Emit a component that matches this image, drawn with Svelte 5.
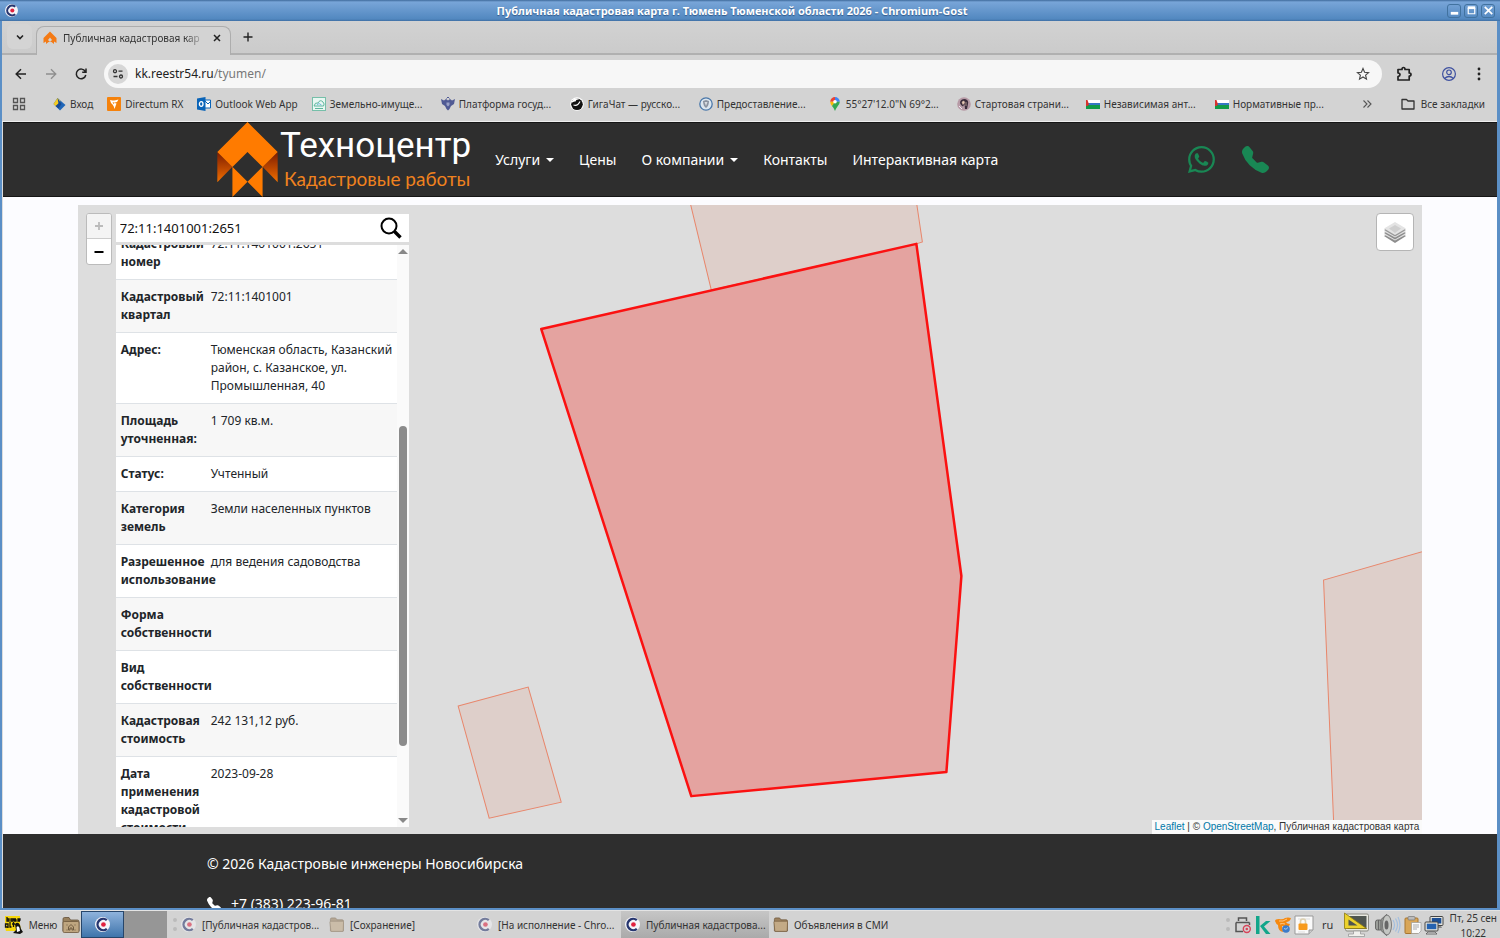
<script>
  const bookmarks = [
    { icon: 'login', label: 'Вход' },
    { icon: 'directum', label: 'Directum RX' },
    { icon: 'outlook', label: 'Outlook Web App' },
    { icon: 'land', label: 'Земельно-имуще...', wide: true },
    { icon: 'eagle', label: 'Платформа госуд...', wide: true },
    { icon: 'giga', label: 'ГигаЧат — русско...', wide: true },
    { icon: 'shield', label: 'Предоставление...', wide: true },
    { icon: 'pin', label: '55°27\'12.0"N 69°2...', wide: true },
    { icon: 'start', label: 'Стартовая страни...', wide: true },
    { icon: 'flag', label: 'Независимая ант...', wide: true },
    { icon: 'flag', label: 'Нормативные пр...', wide: true }
  ];

  const menu = [
    { label: 'Услуги', caret: true },
    { label: 'Цены' },
    { label: 'О компании', caret: true },
    { label: 'Контакты' },
    { label: 'Интерактивная карта' }
  ];

  const rows = [
    ['Кадастровый номер', '72:11:1401001:2651'],
    ['Кадастровый квартал', '72:11:1401001'],
    ['Адрес:', 'Тюменская область, Казанский район, с. Казанское, ул. Промышленная, 40'],
    ['Площадь уточненная:', '1 709 кв.м.'],
    ['Статус:', 'Учтенный'],
    ['Категория земель', 'Земли населенных пунктов'],
    ['Разрешенное использование', 'для ведения садоводства'],
    ['Форма собственности', ''],
    ['Вид собственности', ''],
    ['Кадастровая стоимость', '242 131,12 руб.'],
    ['Дата применения кадастровой стоимости', '2023-09-28']
  ];

  const tasks = [
    { icon: 'chromium', label: '[Публичная кадастров...', faded: true },
    { icon: 'folder', label: '[Сохранение]', faded: true },
    { icon: 'chromium', label: '[На исполнение - Chro...', faded: true },
    { icon: 'chromium', label: 'Публичная кадастрова...', active: true },
    { icon: 'folder', label: 'Объявления в СМИ' }
  ];

  let query = $state('72:11:1401001:2651');

  function scrolled(node) {
    node.scrollTop = 18;
  }
</script>

{#snippet chromium()}
  <svg class="i15" viewBox="0 0 16 16">
    <circle cx="8" cy="8" r="8" fill="#f4f4f8" />
    <path d="M12.6 3.4A6 6 0 1 0 12.6 12.6" fill="none" stroke="#26356f" stroke-width="2.6" />
    <circle cx="9" cy="8" r="2.5" fill="#e0223f" />
  </svg>
{/snippet}

{#snippet folder()}
  <svg class="i15" viewBox="0 0 16 16">
    <path d="M1.5 14.5v-12q0-1.500 1.500-1.500h4l1.500 2h5.500q1.500 0 1.500 1.500v10q0 .8-.8.8h-12.400q-.8 0-.8-.8z" fill="#9d8260" stroke="#6d573c" stroke-width=".8" />
    <path d="M1 5.500q0-1 1-1h12.500q1 0 1 1l-.4 9q0 .8-.8.8h-11.600q-.8 0-.8-.8z" fill="#c3aa86" stroke="#7c6446" stroke-width=".8" />
  </svg>
{/snippet}

{#snippet house()}
  <svg class="i14" viewBox="0 0 14 14">
    <path d="M7 .5l6.500 6.500v5l-2.500-1.500V13L8.500 11h-3L3 13v-2.500L.5 12V7z" fill="#f47a14" />
    <path d="M7 6.500L9 9l-2 2-2-2z" fill="#d3d3d3" />
  </svg>
{/snippet}

{#snippet mark(name)}
  <svg class="i14" viewBox="0 0 14 14">
    {#if name === 'login'}
      <path d="M5.500 1l8 7L8 13.500 1.500 7z" fill="#1f66b8" />
      <path d="M5.500 1l3 3-4.500 5.500L1.500 7z" fill="#f4cb23" />
      <path d="M5.500 1l4 6-3 4.500-3-2.500 3-2.500z" fill="#184a94" />
    {:else if name === 'directum'}
      <rect width="14" height="14" rx="1" fill="#f5820c" />
      <path d="M3 3q3 .5 4 .5t4.500-1l-1.500 2.500-3 .8 2.500.7L7.500 12Q7 9 5.500 7.500 3.500 6 3 3z" fill="#fff" />
      <path d="M5.500 5l2 .8-.8 1.500z" fill="#f5820c" />
    {:else if name === 'outlook'}
      <path d="M7 3h6.500v8H7z" fill="#fff" stroke="#0a64b8" />
      <path d="M8 4l3 3 3-3" fill="none" stroke="#0a64b8" />
      <path d="M0 1.500L8.500 0v14L0 12.500z" fill="#0a64b8" />
      <ellipse cx="4.200" cy="7" rx="1.800" ry="2.400" fill="none" stroke="#fff" stroke-width="1.300" />
    {:else if name === 'land'}
      <rect x=".5" y=".5" width="13" height="13" fill="#e8f7f2" stroke="#76bfa9" />
      <path d="M2 9q1-4 4-3 2-4 5-1 2 2 .5 4zM3 11.500h8" fill="none" stroke="#5db69d" />
      <path d="M5 8l2-1.500L9.500 8" fill="none" stroke="#72b8df" />
    {:else if name === 'eagle'}
      <path d="M0 2l3 1.500L5 2l2 1.500L9 2l2 1.500L14 2l-1 5-3 2-1.500 3L7 13.500 5.500 12 4 9 1 7z" fill="#505a94" />
      <path d="M5.500 5.500h3v2.500L7 9.500 5.500 8z" fill="#9aa1c6" />
      <path d="M5.500 1.500L7 0l1.500 1.500" fill="none" stroke="#505a94" />
    {:else if name === 'giga'}
      <circle cx="7" cy="7" r="6.800" fill="#fff" />
      <circle cx="7" cy="7.300" r="5.800" fill="#111" />
      <path d="M1.500 6Q2 2 6 1.200q2.500 0 3 1.300Q6 2 5.500 4.500 3.500 4 1.500 6z" fill="#fff" />
      <path d="M3.500 8q4 1.500 6.500-3.500" fill="none" stroke="#fff" stroke-width="1.200" />
    {:else if name === 'shield'}
      <circle cx="7" cy="7" r="6.200" fill="#dce6ef" stroke="#4a77a8" stroke-width="1.300" />
      <path d="M4 4l3-1 3 1q0 5-3 7-3-2-3-7z" fill="#8b93a0" />
      <path d="M5.500 5h3L7 9z" fill="#d8dbe0" />
    {:else if name === 'pin'}
      <path d="M7 0a4.800 4.800 0 0 0-4.800 4.800H7z" fill="#e94235" />
      <path d="M7 0a4.800 4.800 0 0 1 4.800 4.800H7z" fill="#4285f4" />
      <path d="M2.200 4.800Q2.200 7 4 9L7 4.800z" fill="#fbbc04" />
      <path d="M11.800 4.800Q11.800 7 9.500 9.500 8 11.500 7 14 6 11 4 9l3-4.200z" fill="#34a853" />
      <circle cx="7" cy="4.800" r="1.800" fill="#fff" />
    {:else if name === 'start'}
      <circle cx="7" cy="7" r="6.800" fill="#b79aa6" />
      <path d="M3 6q0-4 5-4 4 1 3 5l-1 5H8L7.500 7 6 9.500 4 8z" fill="#3b2c3c" />
      <path d="M5 5l2-1 .5 2L6 7.500zM9 5v4" fill="#e8c8b4" stroke="#e8c8b4" stroke-width=".6" />
      <path d="M2 9l3 3" stroke="#f2e4f1" />
    {:else}
      <rect y="3" width="14" height="3" fill="#fff" />
      <rect y="6" width="14" height="2" fill="#3578c4" />
      <rect y="8" width="14" height="4" fill="#119b48" />
      <path d="M0 3h1.500L3 7.500 1.500 9 0 9z" fill="#d9322e" />
    {/if}
  </svg>
{/snippet}

{#snippet phone()}
  <svg viewBox="0 0 16 16" fill="currentColor">
    <path d="M1.885.511a1.745 1.745 0 0 1 2.610.163L6.290 2.980c.329.423.445.974.315 1.494l-.547 2.190a.68.68 0 0 0 .178.643l2.457 2.457a.68.68 0 0 0 .644.178l2.189-.547a1.750 1.750 0 0 1 1.494.315l2.306 1.794c.829.645.905 1.870.163 2.611l-1.034 1.034c-.74.74-1.846 1.065-2.877.702a18.600 18.600 0 0 1-7.010-4.420 18.600 18.600 0 0 1-4.420-7.009c-.362-1.030-.037-2.137.703-2.877z" />
  </svg>
{/snippet}

<div class="desktop">
  <div class="window">
    <header class="titlebar">
      <span class="app-icon">{@render chromium()}</span>
      <span class="title">Публичная кадастровая карта г. Тюмень Тюменской области 2026 - Chromium-Gost</span>
      <div class="winbtns">
        <button aria-label="Свернуть"><svg viewBox="0 0 14 14"><path d="M3 10h8" stroke="#fff" stroke-width="3" /></svg></button>
        <button aria-label="Развернуть"><svg viewBox="0 0 14 14"><path d="M3.500 4v6.500h7V4" fill="none" stroke="#fff" stroke-width="1.300" /><path d="M3 4h8" stroke="#fff" stroke-width="3" /></svg></button>
        <button aria-label="Закрыть"><svg viewBox="0 0 14 14"><path d="M3 3l8 8m0-8l-8 8" stroke="#fff" stroke-width="1.800" /></svg></button>
      </div>
    </header>

    <div class="browser">
      <div class="tabstrip">
        <button class="tabsearch" aria-label="Поиск вкладок"><svg class="i14" viewBox="0 0 14 14"><path d="M4 5.500l3 3 3-3" fill="none" stroke="#222" stroke-width="1.600" /></svg></button>
        <div class="tab">
          {@render house()}
          <span class="tabname">Публичная кадастровая кар</span>
          <button class="close" aria-label="Закрыть вкладку"><svg viewBox="0 0 10 10"><path d="M2 2l6 6m0-6L2 8" stroke="#222" stroke-width="1.500" /></svg></button>
        </div>
        <button class="newtab" aria-label="Новая вкладка"><svg viewBox="0 0 10 10"><path d="M5 .5v9M.5 5h9" stroke="#222" stroke-width="1.400" /></svg></button>
      </div>

      <div class="toolbar">
        <button class="nav" aria-label="Назад"><svg class="i14" viewBox="0 0 14 14"><path d="M12 7H2.500M7 2.200L2.200 7 7 11.800" fill="none" stroke="#222" stroke-width="1.500" /></svg></button>
        <button class="nav" aria-label="Вперёд" disabled><svg class="i14" viewBox="0 0 14 14"><path d="M2 7h9.500M7 2.200L11.800 7 7 11.800" fill="none" stroke="#8e8e8e" stroke-width="1.300" /></svg></button>
        <button class="nav" aria-label="Обновить"><svg class="i14" viewBox="0 0 14 14"><path d="M11.300 4.500A4.800 4.800 0 1 0 11.800 8M12 1.500v3.800H8.200" fill="none" stroke="#222" stroke-width="1.500" /></svg></button>
        <div class="omnibox">
          <button class="site" aria-label="Сведения о сайте"><svg class="i14" viewBox="0 0 14 14" fill="none" stroke="#333" stroke-width="1.300"><circle cx="4" cy="4.200" r="1.500" /><path d="M7.500 4.200h4M2.500 9.500h4" /><circle cx="10" cy="9.500" r="1.500" /></svg></button>
          <span class="url">kk.reestr54.ru<i>/tyumen/</i></span>
          <button class="star" aria-label="Добавить в закладки"><svg class="i14" viewBox="0 0 14 14"><path d="M7 1.500l1.600 3.700 4 .4-3 2.600.9 3.900L7 10l-3.500 2.100.9-3.900-3-2.600 4-.4z" fill="none" stroke="#444" stroke-width="1.100" /></svg></button>
        </div>
        <div class="tools">
          <button class="nav" aria-label="Расширения"><svg class="i16" viewBox="0 0 16 16"><path d="M2 3.500h4q0-2 1.500-2T9 3.500h4.200V7q1.800 0 1.800 1.500T13.200 10v4H2v-3.500q2-.3 2-1.800T2 7z" fill="none" stroke="#222" stroke-width="1.700" stroke-linejoin="round" /></svg></button>
          <button class="nav" aria-label="Профиль"><svg class="i16" viewBox="0 0 16 16" fill="none" stroke="#3f51a0" stroke-width="1.200"><circle cx="8" cy="8" r="6.400" /><circle cx="8" cy="6.300" r="2.300" /><path d="M3.500 12.500Q8 8.500 12.500 12.500" /></svg></button>
          <button class="nav" aria-label="Меню"><svg class="i16" viewBox="0 0 16 16" fill="#222"><circle cx="8" cy="3" r="1.400" /><circle cx="8" cy="8" r="1.400" /><circle cx="8" cy="13" r="1.400" /></svg></button>
        </div>
      </div>

      <nav class="bookmarks" aria-label="Закладки">
        <svg class="i14 grid" viewBox="0 0 14 14" fill="none" stroke="#555" stroke-width="1.300"><path d="M1.500 1.500h4v4h-4zM8.500 1.500h4v4h-4zM1.500 8.500h4v4h-4zM8.500 8.500h4v4h-4z" /></svg>
        {#each bookmarks as b}
          <a href="#top" class:wide={b.wide}>{@render mark(b.icon)}<span>{b.label}</span></a>
        {/each}
        <svg class="i10 more" viewBox="0 0 10 10"><path d="M1.500 1.500L5 5 1.500 8.500M5.500 1.500L9 5 5.500 8.500" fill="none" stroke="#555" stroke-width="1.100" /></svg>
        <a class="all" href="#top"><svg class="i14" viewBox="0 0 14 14"><path d="M1 2.500h4.500L7 4h6v8H1z" fill="none" stroke="#333" stroke-width="1.300" stroke-linejoin="round" /></svg><span>Все закладки</span></a>
      </nav>
    </div>

    <div class="page">
      <header class="sitehead">
        <div class="container">
          <a class="logo" href="#top">
            <svg viewBox="20 10 186 228">
              <defs>
                <linearGradient id="wing" x1="0" y1="0" x2="0" y2="1">
                  <stop offset="0" stop-color="#7c1c00" />
                  <stop offset=".6" stop-color="#c24c00" />
                  <stop offset="1" stop-color="#f07000" />
                </linearGradient>
              </defs>
              <path d="M21 101l46 45-46 47zM205 101l-46 45 46 47z" fill="url(#wing)" />
              <path d="M113 10l92 91-46 46-46-46-46 46-46-46zM67 146l46 46-46 46zM159 146l-46 46 46 46z" fill="#ff7b00" />
            </svg>
            <span class="brand"><b>Техноцентр</b><small>Кадастровые работы</small></span>
          </a>
          <nav class="menu">
            {#each menu as m}
              <a href="#top">{m.label}{#if m.caret}<i class="caret"></i>{/if}</a>
            {/each}
          </nav>
          <div class="contacts">
            <a href="#top" aria-label="WhatsApp">
              <svg viewBox="0 0 16 16" fill="currentColor"><path d="M13.601 2.326A7.850 7.850 0 0 0 7.994 0C3.627 0 .068 3.558.064 7.926c0 1.399.366 2.760 1.057 3.965L0 16l4.204-1.102a7.900 7.900 0 0 0 3.790.965h.004c4.368 0 7.926-3.558 7.930-7.930A7.900 7.900 0 0 0 13.600 2.326zM7.994 14.521a6.600 6.600 0 0 1-3.356-.92l-.24-.144-2.494.654.666-2.433-.156-.251a6.560 6.560 0 0 1-1.007-3.505c0-3.626 2.957-6.584 6.591-6.584a6.560 6.560 0 0 1 4.660 1.931 6.560 6.560 0 0 1 1.928 4.660c-.004 3.639-2.961 6.592-6.592 6.592m3.615-4.934c-.197-.099-1.170-.578-1.353-.646-.182-.065-.315-.099-.445.099-.133.197-.513.646-.627.775-.114.133-.232.148-.43.050-.197-.1-.836-.308-1.592-.985-.59-.525-.985-1.175-1.103-1.372-.114-.198-.011-.304.088-.403.087-.088.197-.232.296-.346.1-.114.133-.198.198-.33.065-.134.034-.248-.015-.347-.050-.099-.445-1.076-.612-1.470-.16-.389-.323-.335-.445-.34-.114-.007-.247-.007-.38-.007a.73.73 0 0 0-.529.247c-.182.198-.691.677-.691 1.654s.71 1.916.81 2.049c.098.133 1.394 2.132 3.383 2.992.47.205.84.326 1.129.418.475.152.904.129 1.246.080.38-.058 1.171-.48 1.338-.943.164-.464.164-.86.114-.943-.049-.084-.182-.133-.38-.232" /></svg>
            </a>
            <a href="#top" aria-label="Телефон">{@render phone()}</a>
          </div>
        </div>
      </header>

      <main class="map">
        <svg class="plots" viewBox="0 0 1344 629" preserveAspectRatio="xMidYMid slice">
          <g fill="#e8866b" fill-opacity=".16" stroke="#e8866b" stroke-width="1">
            <path d="M610-10l23 95 205-46 6-2-7-47z" />
            <path d="M380 501l70-19 33 115-72 16z" />
            <path d="M1353 344l-108 31 11 264h97z" />
          </g>
          <path d="M463 124L838 39l45 332-15 196-255 24z" fill="#f4352b" fill-opacity=".34" stroke="#fb1111" stroke-width="2.500" stroke-linejoin="round" />
        </svg>

        <div class="zoom">
          <button disabled aria-label="Приблизить"><svg viewBox="0 0 10 10"><path d="M5 1v8M1 5h8" stroke="#bbb" stroke-width="1.800" /></svg></button>
          <button aria-label="Отдалить"><svg viewBox="0 0 10 10"><path d="M.5 5h9" stroke="#000" stroke-width="2" /></svg></button>
        </div>

        <section class="panel">
          <div class="search">
            <input aria-label="Кадастровый номер" bind:value={query} />
            <button aria-label="Найти"><svg viewBox="0 0 22 22"><circle cx="9" cy="9" r="7.500" fill="none" stroke="#000" stroke-width="2" /><path d="M14.500 14.500l6 6" stroke="#000" stroke-width="3.400" /></svg></button>
          </div>
          <div class="results">
            <div class="scroller" use:scrolled>
              <table>
                <tbody>
                  {#each rows as [name, value]}
                    <tr><th scope="row">{name}</th><td>{value}</td></tr>
                  {/each}
                </tbody>
              </table>
            </div>
            <div class="bar" aria-hidden="true">
              <i class="up"></i>
              <div class="track"><i class="thumb"></i></div>
              <i class="down"></i>
            </div>
          </div>
        </section>

        <button class="layers" aria-label="Слои">
          <svg viewBox="0 0 26 26">
            <path d="M2 17l11-6.500L24 17l-11 7z" fill="#8d8d8d" />
            <path d="M2 15.500L13 9l11 6.500L13 21.500z" fill="#e4e4e4" />
            <path d="M2 14l11-6.500L24 14l-11 6.500z" fill="#8d8d8d" />
            <path d="M2 12.500L13 6l11 6.500L13 18.500z" fill="#e4e4e4" />
            <path d="M2 11l11-6.500L24 11l-11 6.500z" fill="#999" />
            <path d="M2 9.500L13 3l11 6.500L13 16z" fill="#e4e4e4" />
            <path d="M7 9.500L13 6l6 3.500-6 4.500z" fill="#cfcfcf" />
          </svg>
        </button>

        <div class="credit"><a href="#top">Leaflet</a> | © <a href="#top">OpenStreetMap</a>, Публичная кадастровая карта</div>
      </main>

      <footer class="sitefoot">
        <div class="container col">
          <p>© 2026 Кадастровые инженеры Новосибирска</p>
          <p class="tel">{@render phone()}<span>+7 (383) 223-96-81</span></p>
        </div>
      </footer>
    </div>
  </div>

  <footer class="taskbar">
    <button class="start">
      <svg viewBox="0 0 20 20"><path d="M1 1h15v9l2 8-8-2H2l-1-4z" fill="#f6d70c" /><g fill="none" stroke="#111" stroke-width="1.300"><path d="M3 2v4h2V4H3M7 4h2v2H7zM12 4h-2v1h2v1h-2M13.500 5H16V4h-2v2h2M4 13V9H1.500v3H4M6 7v5h1.500M8 9h3M9.500 7v5" /></g><path d="M11 9q3-3 5 1l1 4 2 3-3 2-7-1 3-3z" fill="#111" /><path d="M12.500 12q2-2 3 1l.5 3-3 1z" fill="#fff" /></svg>
      Меню
    </button>
    <button class="home" aria-label="Домашняя папка">
      <svg viewBox="0 0 18 18"><path d="M1 15V3q0-1.500 1.500-1.500H7L8.500 4h7Q17 4 17 5.500V15z" fill="#98805d" stroke="#63513a" stroke-width=".8" /><rect x="1" y="5.500" width="16" height="11" rx="1.200" fill="#bfa680" stroke="#6c573c" stroke-width=".8" /><path d="M4.500 9h1M12.500 9h1M4.500 14h1M12.500 14h1M6.500 11L9 8.500l2.500 2.500v3H10v-2H8v2H6.500z" fill="none" stroke="#6f5b40" stroke-width="1" /></svg>
    </button>
    <button class="desk on" aria-label="Рабочее место 1">{@render chromium()}</button>
    <button class="desk" aria-label="Рабочее место 2"></button>
    <span class="grip"></span>
    <div class="tasks">
      {#each tasks as t}
        <button class:active={t.active} class:faded={t.faded}>
          {#if t.icon === 'folder'}{@render folder()}{:else}{@render chromium()}{/if}
          <span>{t.label}</span>
        </button>
      {/each}
    </div>
    <span class="grip"></span>
    <div class="tray">
      <svg class="i18" viewBox="0 0 18 18"><path d="M4.500 5V2h8v3M2 6.500h13.500M9 15.500H2v-9M15.500 6.500V9" fill="none" stroke="#555" stroke-width="1.500" /><circle cx="12.800" cy="13" r="3.500" fill="none" stroke="#d7445a" stroke-width="1.400" /><circle cx="12.800" cy="13" r="1.300" fill="#d7445a" /></svg>
      <svg class="i18" viewBox="0 0 18 18"><path d="M2 0h3.500v18H2zM6 10l6-5h4.500L10 10.500l6.500 7.500H12z" fill="#12a68a" /></svg>
      <svg class="i18" viewBox="0 0 18 18"><path d="M1 5q0-2 4-2 4 1 6-1 3-1 6 0-1 4-5 4 1 2 4 2l-1 2H8l1 6Q4 15 4 9 2 8 1 5z" fill="#f6890f" /><path d="M5 5q4 1 8-2M6 8q2-1 5 0" fill="none" stroke="#fbc787" /><circle cx="12" cy="13" r="3.800" fill="#3d7cc9" /><path d="M10 12.500q2 2 4-1" fill="none" stroke="#a8cdf2" /></svg>
      <svg class="i20" viewBox="0 0 20 20"><path d="M1 1h18v14l-4 4H1z" fill="#fafafa" stroke="#999" /><path d="M4 4h12M4 17h7" stroke="#ddd" /><path d="M6.500 9V6.500Q6.500 4 9 4t2.500 2.500V9" fill="none" stroke="#ddd0b0" stroke-width="1.600" /><rect x="4.500" y="8.500" width="9" height="6.500" rx="1" fill="#f79a1c" /><path d="M15 19v-4h4" fill="#ccc" stroke="#999" /></svg>
      <span class="lang">ru</span>
      <svg class="i26" viewBox="0 0 26 26"><rect x="2" y="2" width="23" height="17" rx="1.500" fill="#e8e8e0" stroke="#8b8b84" /><rect x="4" y="4" width="19" height="13" fill="#4f5550" /><path d="M1 1l22 15.500H1z" fill="#ecd22c" stroke="#8d7a10" stroke-width=".8" /><path d="M5 7.500l9 6H5z" fill="#4f5550" /><path d="M10 19h7v3h4v2.500H5V22h5z" fill="#f0f0ec" stroke="#999" stroke-width=".8" /></svg>
      <svg class="i26" viewBox="0 0 26 26"><path d="M1 10q0-2 2-2h3l6-5.500q4 4 4 10.500t-4 10.500L6 18H3q-2 0-2-2z" fill="#9a9d99" stroke="#555" stroke-width=".8" /><path d="M4 8v10M6.500 8v10" stroke="#666" /><ellipse cx="12.500" cy="13" rx="4.500" ry="10" fill="#c4c6c3" stroke="#666" stroke-width=".8" /><ellipse cx="12" cy="13" rx="2" ry="4.500" fill="#666" /><path d="M18.500 8q3 5 0 10M21 6.500q4 6.500 0 13M23.500 5q4 8 0 16" fill="none" stroke="#a3bfdf" stroke-width="1.200" /></svg>
      <svg class="i18" viewBox="0 0 18 18"><rect x="1" y="2" width="13" height="15.500" rx="1" fill="#d9a657" stroke="#a87630" /><rect x="4" y=".5" width="7" height="3.500" rx="1" fill="#bbb" stroke="#777" stroke-width=".7" /><path d="M7.500 6.500H17V15l-2.500 2.500h-7z" fill="#fafafa" stroke="#999" stroke-width=".7" /><path d="M9 9h6M9 11h6M9 13h4" stroke="#aaa" /></svg>
      <svg class="i20" viewBox="0 0 20 20"><rect x="6" y="1.500" width="13" height="9" rx="1" fill="#e4e4de" stroke="#444" /><rect x="7.800" y="3" width="9.500" height="5.500" fill="#1c4f95" /><path d="M13 11h4l1 2h-4z" fill="#888" /><rect x="1" y="7" width="13" height="9" rx="1" fill="#e4e4de" stroke="#444" /><rect x="2.800" y="8.700" width="9.500" height="5.500" fill="#2562b0" /><path d="M4 17h7l2 2H2z" fill="#ddd" stroke="#555" stroke-width=".8" /></svg>
      <time>Пт, 25 сен<br />10:22</time>
    </div>
  </footer>
</div>

<style>
  :global(body) { margin: 0; overflow: hidden; }
  * { box-sizing: border-box; }
  button { border: 0; padding: 0; background: none; font: inherit; color: inherit; display: flex; align-items: center; justify-content: center; }
  a { color: inherit; text-decoration: none; }
  i { font-style: normal; }
  svg { display: block; flex: none; }
  .i10 { width: 10px; height: 10px; }
  .i14 { width: 14px; height: 14px; }
  .i15 { width: 15px; height: 15px; }
  .i16 { width: 16px; height: 16px; }
  .i18 { width: 18px; height: 18px; }
  .i20 { width: 20px; height: 20px; }
  .i26 { width: 29px; height: 26px; }

  .desktop { height: 100vh; display: flex; flex-direction: column; font: 10px/16px "Noto Sans", sans-serif; color: #333; background: #d3d3d3; }
  .window { flex: 1; min-height: 0; display: flex; flex-direction: column; border: solid #5b8fc6; border-width: 0 3px 2px 2px; }

  .titlebar { height: 21px; flex: none; margin: 0 -3px; display: flex; align-items: center; padding: 0 5px 0 6px; background: linear-gradient(#3f6b9c 0, #78a5d8 2px, #5288c0 19px, #3f6fa5 21px); color: #fff; }
  .app-icon, .winbtns { width: 54px; display: flex; }
  .app-icon { width: 18px; }
  .app-icon svg { width: 13px; height: 13px; }
  .title { flex: 1; text-align: center; font-size: 11px; font-weight: 700; text-shadow: 0 1px 1px #30598a; }
  .winbtns { justify-content: flex-end; gap: 3px; }
  .winbtns button { width: 14px; height: 14px; border: 1px solid #41729f; border-radius: 3px; }
  .winbtns svg { width: 13px; height: 13px; }

  .browser { flex: none; background: #d3d3d3; border-bottom: 1px solid #eee; }
  .tabstrip { height: 34px; display: flex; align-items: flex-end; padding-left: 5px; border-bottom: 2px solid #b0b0b0; background: linear-gradient(#d2d2d2, #cbcbcb); }
  .tabsearch { width: 25px; height: 25px; margin: 0 4px 4px 0; border-radius: 6px; background: #d4d4d4; }
  .tab { width: 195px; height: 29px; margin-bottom: -2px; padding: 0 8px 6px 6px; display: flex; align-items: center; gap: 6px; border: 1px solid #adadad; border-bottom: 0; border-radius: 8px 8px 0 0; background: #d3d3d3; }
  .tabname { flex: 1; white-space: nowrap; -webkit-mask: linear-gradient(90deg, #000 85%, transparent); mask: linear-gradient(90deg, #000 85%, transparent); }
  .close svg, .newtab svg { width: 10px; height: 10px; }
  .newtab { width: 34px; height: 32px; }

  .toolbar { height: 37px; display: flex; align-items: center; padding: 0 5px 0 6px; }
  .nav { width: 26px; height: 28px; margin-right: 4px; }
  .omnibox { flex: 1; height: 28px; margin-left: 6px; padding: 0 12px 0 4px; border-radius: 14px; background: #f7f7f7; display: flex; align-items: center; gap: 7px; }
  .site { width: 20px; height: 20px; border-radius: 50%; background: #d7d7d7; }
  .url { flex: 1; font-size: 12px; color: #222; }
  .url i { color: #777; }
  .tools { display: flex; margin-left: 9px; }
  .tools .nav { margin: 0; }
  .tools .nav:first-child { margin-right: 19px; }
  .tools .nav:last-child { margin-left: 4px; }

  .bookmarks { height: 29px; display: flex; align-items: center; gap: 14px; padding: 0 12px 5px 10px; white-space: nowrap; }
  .bookmarks a { display: flex; align-items: center; gap: 4px; }
  .grid { margin-right: 12px; }
  .wide { width: 115px; }
  .more { margin-left: 18px; }
  .all { margin-left: auto; }
  .bookmarks .all { gap: 6px; }

  .page { flex: 1; min-height: 0; display: flex; flex-direction: column; background: #fcfcff; border-left: 1px solid #ddd; }
  .container { width: 100%; max-width: 1110px; margin: 0 auto; padding: 0 12px; display: flex; align-items: center; }
  .col { flex-direction: column; align-items: flex-start; }
  .sitehead { height: 75px; flex: none; background: #2e2e2e; border: solid #151515; border-width: 1px 0; margin-bottom: 8px; display: flex; color: #fff; font-size: 14px; }
  .logo { display: flex; gap: 2px; margin: 0 24px 0 10px; }
  .logo svg { width: 61px; height: 75px; }
  .brand { display: flex; flex-direction: column; font-family: Lato, "Noto Sans", sans-serif; }
  .brand b { font: 400 35px/46px Roboto, sans-serif; padding-top: 1px; }
  .brand small { font-size: 19px; line-height: 19px; color: #f0821e; padding-left: 4px; white-space: nowrap; }
  .menu { display: flex; gap: 25px; white-space: nowrap; }
  .caret { display: inline-block; margin-left: 6px; vertical-align: 3px; border: 4px solid transparent; border-top-color: #fff; border-bottom: 0; }
  .contacts { display: flex; gap: 27px; margin: 0 24px 0 auto; color: #198754; }
  .contacts svg { width: 27px; height: 27px; }

  .map { flex: 1; min-height: 0; width: 90%; margin: 0 auto; position: relative; background: #ddd; overflow: hidden; display: flex; align-items: flex-start; padding: 8px 8px 7px; }
  .plots { position: absolute; inset: 0; width: 100%; height: 100%; }
  .zoom { position: relative; border: 1px solid #bbb; border-radius: 3px; background: #fff; overflow: hidden; margin-right: 4px; }
  .zoom button { width: 24px; height: 25px; }
  .zoom button:first-child { background: #f4f4f4; border-bottom: 1px solid #ccc; }
  .zoom svg { width: 10px; height: 10px; }
  .panel { position: relative; width: 293px; height: 100%; padding-top: 1px; display: flex; flex-direction: column; gap: 3px; }
  .search { height: 28px; flex: none; display: flex; align-items: center; background: #fff; padding: 0 7px 0 4px; }
  .search input { flex: 1; min-width: 0; border: 0; padding: 0; outline: 0; background: none; font: 13px/20px "Noto Sans", sans-serif; color: #111; }
  .search svg { width: 22px; height: 22px; }
  .results { flex: 1; min-height: 0; display: flex; background: #fff; }
  .scroller { flex: 1; overflow-y: auto; scrollbar-width: none; }
  table { width: 100%; border-collapse: separate; border-spacing: 0; table-layout: fixed; font-size: 12px; line-height: 18px; color: #212529; }
  th, td { padding: 8px 0 8px 5px; text-align: left; vertical-align: top; border-bottom: 1px solid #dee2e6; }
  th { width: 90px; font-weight: 700; }
  tr:nth-child(even) { background: #f7f7f7; }
  .bar { width: 12px; background: #fafafa; display: flex; flex-direction: column; align-items: center; padding: 4px 0; }
  .up, .down { border: 5px solid transparent; }
  .up { border-bottom-color: #888; border-top: 0; }
  .down { border-top-color: #888; border-bottom: 0; }
  .track { flex: 1; width: 8px; display: flex; flex-direction: column; justify-content: flex-end; padding: 0 0 72px; }
  .thumb { height: 65%; border-radius: 4px; background: #8b8b8b; }
  .layers { position: relative; margin-left: auto; width: 38px; height: 38px; border: 1px solid #b5b5b5; border-radius: 4px; background: #fff; }
  .layers svg { width: 26px; height: 26px; }
  .credit { position: absolute; right: 0; bottom: 0; padding: 0 3px; background: #fafafa; font: 10px/14px "Liberation Sans", Arial, sans-serif; color: #333; }
  .credit a { color: #0078a8; }

  .sitefoot { height: 74px; flex: none; overflow: hidden; background: #2e2e2e; color: #fff; font-size: 14px; line-height: 20px; }
  .sitefoot p { margin: 20px 0 0; }
  .tel { display: flex; align-items: center; gap: 10px; }
  .tel svg { width: 14px; height: 14px; }

  .taskbar { height: 28px; flex: none; display: flex; align-items: stretch; background: #d3d3d3; border-top: 1px solid #e4e4e4; }
  .start { width: 61px; gap: 5px; white-space: nowrap; }
  .start svg { width: 20px; height: 20px; }
  .home { width: 20px; }
  .home svg { width: 18px; height: 18px; }
  .desk { width: 43px; background: #969696; }
  .desk.on { background: linear-gradient(#8fb3dc, #3f74ab); border: 1px solid #27466b; }
  .grip { flex: none; width: 4px; margin: 7px 0 7px 6px; border-left: 4px dotted #bbb; }
  .tasks { flex: 1; display: flex; }
  .tasks button { width: 148px; padding-left: 4px; justify-content: flex-start; gap: 6px; white-space: nowrap; }
  .tasks .active { background: linear-gradient(#c6c6c6, #aaa); }
  .faded svg { opacity: .55; }
  .tray { display: flex; align-items: center; gap: 2px; padding: 0 3px 0 4px; }
  .lang { width: 24px; text-align: center; font-size: 11px; }
  time { line-height: 15px; text-align: center; white-space: nowrap; padding-top: 3px; margin-left: 4px; }
</style>
